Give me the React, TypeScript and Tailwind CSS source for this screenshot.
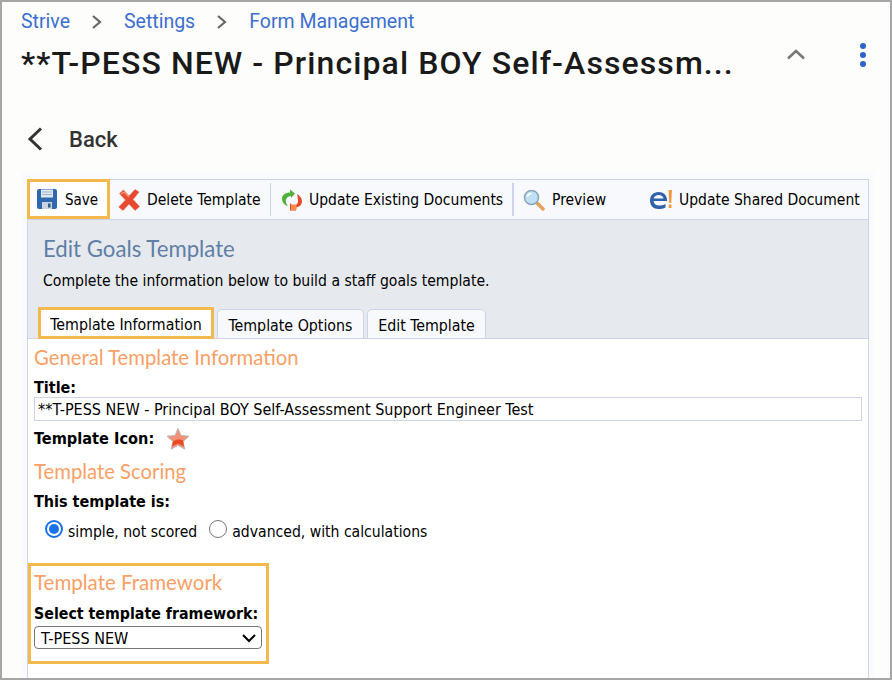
import React from "react";

const body = "font-['DejaVu_Sans_Condensed','Noto_Sans',sans-serif]";

function Save() {
  return (
    <svg width="22" height="22" viewBox="0 0 22 22">
      <path d="M1 3a2 2 0 0 1 2-2h16a2 2 0 0 1 2 2v16a2 2 0 0 1-2 2H3a2 2 0 0 1-2-2z" fill="#2f68b0" />
      <rect x="5" y="1.500" width="12" height="8" fill="#dfe7f1" />
      <rect x="6" y="3.500" width="10" height="1" fill="#9fb3cc" />
      <rect x="6" y="6" width="10" height="1" fill="#9fb3cc" />
      <rect x="6" y="14" width="10" height="7" fill="#c9d3df" />
      <rect x="12" y="15.500" width="2.500" height="4" fill="#33597f" />
    </svg>
  );
}
function Del() {
  return (
    <svg width="22" height="22" viewBox="0 0 22 22">
      <path d="M1.500 4.500 5.500 1 11 7 17 .5 21 3 15 10.500 21.500 17.500 17 21.500 11 15 5 21.500 .8 18 7.500 11z" fill="#e8492f" stroke="#d9694f" strokeWidth=".6" />
      <path d="M3 5 6 3 11 8" fill="none" stroke="#f59a80" strokeWidth="1.200" />
    </svg>
  );
}
function Refresh() {
  return (
    <svg width="22" height="22" viewBox="0 0 22 22">
      <path d="M9 .5l5 4-4 4.500V7C6 7.500 4.500 10 5 13c.3 2 1.200 3 2 4-3-.5-6-3.500-6-7.500C1 6 4.500 3.500 9 3.500z" fill="#52b13c" />
      <path d="M16 5c3 1.500 5 4.500 5 7.500 0 3.500-3 5.500-6 6v3H9V14l2.500 2.500 2 0c2-.5 3.500-2 3.500-4.500 0-2.500-.5-4.500-1-7z" fill="#e8472b" />
      <rect x="10" y="15.500" width="5.500" height="5.500" fill="#f2904a" />
    </svg>
  );
}
function Search() {
  return (
    <svg width="22" height="22" viewBox="0 0 22 22">
      <path d="M13 13l7 7" stroke="#e9a05c" strokeWidth="3.500" strokeLinecap="round" />
      <circle cx="8.500" cy="8.500" r="7" fill="#bfe0f5" stroke="#8aa4b8" strokeWidth="1.500" />
      <path d="M4.500 8c.3-2 2-3.500 4-3.500" fill="none" stroke="#fff" strokeWidth="1.500" />
    </svg>
  );
}
function ELogo() {
  return (
    <svg width="24" height="22" viewBox="0 0 24 22">
      <path d="M18 12H4.500c.3 3 2.800 4.500 5.500 4.500 2.200 0 4.500-.5 6.500-1.500v3.500c-2 1-4.500 1.500-7 1.500C4.500 20 1 16.500 1 11.500 1 6.500 4.500 3 9.500 3S18 6.500 18 11zM14.500 9.500C14.200 7.500 12.200 6 9.700 6 7.200 6 5.200 7.500 4.700 9.500z" fill="#2f62a8" />
      <path d="M19.500 1h3.500l-.8 13h-2z" fill="#f09a3e" />
      <rect x="19.700" y="15.500" width="2.800" height="3.500" fill="#f09a3e" />
    </svg>
  );
}
function Star() {
  return (
    <svg width="24" height="24" viewBox="0 0 24 24">
      <path d="M12 1.500l3 7 8 .7-6 5.300 1.800 7.700-6.800-4-6.800 4L7 14.500 1 9.200l8-.7z" fill="#f48f78" stroke="#c2b5b0" strokeWidth="1" />
      <path d="M7 14.500c4-2.500 7-2.500 10-1l1 6-6-3-6 3z" fill="#ea4a22" />
    </svg>
  );
}

function Tool({ icon, label, className }: { icon: React.ReactNode; label: string; className: string }) {
  return (
    <div className={`flex items-center shrink-0 ${className}`}>
      {icon}
      <span className="pt-[2px]">{label}</span>
    </div>
  );
}

function Crumb() {
  return (
    <svg className="ml-[21px]" width="12" height="16" viewBox="0 0 12 16"><path d="M2 2 9 8 2 14" fill="none" stroke="#666" strokeWidth="2.200" /></svg>
  );
}

export default function App() {
  return (
    <div className="w-[892px] h-[680px] overflow-hidden bg-[#a6a6a6] p-[2px]">
      <div className="w-[888px] h-[676px] overflow-hidden bg-[#fdfdfb] font-['Roboto',sans-serif]">
        <div className="flex items-center h-[39px] pl-[19px] text-[19.500px] text-[#3b6fcf]">
          <span>Strive</span>
          <Crumb />
          <span className="ml-[21px]">Settings</span>
          <Crumb />
          <span className="ml-[21px]">Form Management</span>
        </div>
        <div className="flex items-start h-[72px]">
          <div className="pl-[19px] w-[731px] text-[32px] leading-[44px] font-medium tracking-[1.100px] text-[#1a1a1a] whitespace-nowrap">
            **T-PESS NEW - Principal BOY Self-Assessm...
          </div>
          <svg className="ml-[53px] mt-[7px]" width="20" height="12" viewBox="0 0 20 12"><path d="M2 10.500 10 3 18 10.500" fill="none" stroke="#777" strokeWidth="2.500" /></svg>
          <svg className="ml-[53px] mt-[1px]" width="8" height="26" viewBox="0 0 8 26"><g fill="#2c62c9"><circle cx="4" cy="4" r="3" /><circle cx="4" cy="13" r="3" /><circle cx="4" cy="22" r="3" /></g></svg>
        </div>
        <div className="flex items-center h-[59px] pl-[24px] pb-[7px]">
          <svg width="18" height="26" viewBox="0 0 18 26"><path d="M15 2.500 4 13l11 10.500" fill="none" stroke="#333" strokeWidth="3" /></svg>
          <span className="ml-[25px] text-[22px] font-medium text-[#333333]">Back</span>
        </div>
        <div className="ml-[19px] w-[853px] bg-[#fafbfd] pt-[7px] px-[6px] h-[520px]">
          <div className={`w-[842px] h-[500px] bg-white border border-[#cdd3ea] border-b-0 text-[15.600px] text-black ${body}`}>
            <div className="flex items-stretch h-[40px] bg-[#f8f9fc] border-b-[1.500px] border-[#cdd3ea] leading-none text-[15.500px]">
              <Tool className="w-[83px] pl-[6px] gap-[7px] bg-white border-[3px] border-[#f3b94f] -mt-[1px] -ml-[1px] text-[15px]" icon={<Save />} label="Save" />
              <Tool className="w-[161px] pl-[8px] gap-[7px] border-r border-[#cdd3ea] my-[3px]" icon={<Del />} label="Delete Template" />
              <Tool className="w-[243px] pl-[10px] gap-[6px] border-r-2 border-[#cdd3ea] my-[3px]" icon={<Refresh />} label="Update Existing Documents" />
              <Tool className="w-[135px] pl-[9px] gap-[7px]" icon={<Search />} label="Preview" />
              <Tool className="pl-0 gap-[6px]" icon={<ELogo />} label="Update Shared Document" />
            </div>
            <div className="h-[119px] bg-[#e6e9ee] border-b border-[#cdd3ea] pt-[14px] relative">
              <div className="pl-[15px] text-[22.200px] leading-[30px] text-[#5f7fa6] font-['Lato',sans-serif]">Edit Goals Template</div>
              <div className="pl-[15px] mt-[5px] leading-[24px]">Complete the information below to build a staff goals template.</div>
              <div className="absolute left-[10px] bottom-[-1px] flex items-end gap-[3px] text-[15.800px]">
                <div className="h-[32px] w-[176px] pt-[3px] flex items-center justify-center bg-white border-[3px] border-[#f3b94f]">Template Information</div>
                <div className="h-[30px] w-[147px] pt-[4px] flex items-center justify-center bg-[#f8f9fc] border border-[#cdd3ea] rounded-t-[5px]">Template Options</div>
                <div className="h-[30px] w-[119px] pt-[4px] flex items-center justify-center bg-[#f8f9fc] border border-[#cdd3ea] rounded-t-[5px]">Edit Template</div>
              </div>
            </div>
            <div className="pl-[6px] pt-[5px]">
              <div className="text-[20.300px] leading-[26px] text-[#f9a066] font-['Lato',sans-serif]">General Template Information</div>
              <div className="font-bold text-[16px] h-[20px] leading-[22px] mt-[7px]">Title:</div>
              <div className="w-[828px] h-[24px] border border-[#cdd3ea] pl-[3px] text-[16px] leading-[24px]">**T-PESS NEW - Principal BOY Self-Assessment Support Engineer Test</div>
              <div className="flex items-center h-[30px] mt-[2px] pt-[2px]">
                <span className="font-bold text-[16.200px]">Template Icon:</span>
                <span className="ml-[12px]"><Star /></span>
              </div>
              <div className="text-[20.300px] leading-[26px] mt-[5px] text-[#f9a066] font-['Lato',sans-serif]">Template Scoring</div>
              <div className="font-bold text-[16px] h-[20px] leading-[22px] mt-[7px]">This template is:</div>
              <div className="flex items-center h-[30px] mt-[5px] pl-[11px] pt-[4px]">
                <span className="w-[18px] h-[18px] rounded-full border-[2px] border-[#1a73e8] bg-white flex items-center justify-center -mt-[9px]">
                  <span className="w-[10px] h-[10px] rounded-full bg-[#1a73e8]" />
                </span>
                <span className="ml-[5px]">simple, not scored</span>
                <span className="ml-[12px] w-[18px] h-[18px] rounded-full border-[1.500px] border-[#767676] bg-white -mt-[9px]" />
                <span className="ml-[5px]">advanced, with calculations</span>
              </div>
            </div>
            <div className="mt-[17px] w-[241px] h-[101px] border-[3px] border-[#f3b94f] pl-[3px] pt-[3px]">
              <div className="text-[20.500px] leading-[26px] text-[#f9a066] font-['Lato',sans-serif]">Template Framework</div>
              <div className="font-bold text-[15.800px] h-[20px] leading-[22px] mt-[8px]">Select template framework:</div>
              <div className="mt-[3px] w-[228px] h-[23px] border border-[#767676] rounded-[4px] flex items-center justify-between pl-[6px] pr-[4px] text-[16px]">
                <span className="pt-[2px]">T-PESS NEW</span>
                <svg width="16" height="10" viewBox="0 0 16 10"><path d="M2 2l6 6 6-6" fill="none" stroke="#000" strokeWidth="2" /></svg>
              </div>
            </div>
          </div>
        </div>
      </div>
    </div>
  );
}
